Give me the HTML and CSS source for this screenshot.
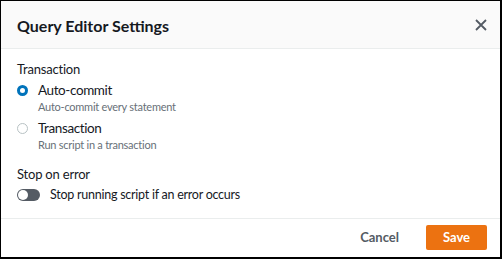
FILE: index.html
```html
<!DOCTYPE html>
<html>
<head>
<meta charset="utf-8">
<link rel="stylesheet" href="styles.css">
</head>
<body>
<div class="modal">
  <div class="header">
    <div class="title">Query Editor Settings</div>
    <svg class="close" width="12" height="12" viewBox="0 0 12 12"><path d="M1 1L11 11M11 1L1 11" stroke="#545b64" stroke-width="1.8" fill="none"/></svg>
  </div>
  <div class="body">
    <div class="group">
      <div class="label">Transaction</div>
      <div class="radio-row">
        <span class="radio checked"></span>
        <div class="radio-text">
          <div class="opt">Auto-commit</div>
          <div class="desc">Auto-commit every statement</div>
        </div>
      </div>
      <div class="radio-row">
        <span class="radio"></span>
        <div class="radio-text">
          <div class="opt">Transaction</div>
          <div class="desc">Run script in a transaction</div>
        </div>
      </div>
    </div>
    <div class="group">
      <div class="label">Stop on error</div>
      <div class="toggle-row">
        <span class="toggle"><span class="knob"></span></span>
        <span class="toggle-text">Stop running script if an error occurs</span>
      </div>
    </div>
  </div>
  <div class="footer">
    <button class="cancel">Cancel</button>
    <button class="save">Save</button>
  </div>
</div>
</body>
</html>
```
FILE: styles.css
```css
* { box-sizing: border-box; }
html, body { margin: 0; padding: 0; }
body {
  width: 502px;
  height: 259px;
  background: #000;
  font-family: Lato, "Open Sans", "Liberation Sans", Arial, sans-serif;
  color: #16191f;
  overflow: hidden;
}
.modal {
  margin: 1px 2px 2px 1px;
  width: 499px;
  height: 256px;
  background: #fff;
  display: flex;
  flex-direction: column;
}
.header {
  height: 48px;
  background: #fafafa;
  border-bottom: 1px solid #eaeded;
  display: flex;
  align-items: center;
  justify-content: space-between;
  padding: 0 13px 0 16px;
}
.title {
  font-weight: 700;
  font-size: 16px;
  margin-top: 1px;
}
.close { display: block; }
.body {
  flex: 1;
  padding: 12px 16px 0 16px;
  display: flex;
  flex-direction: column;
  gap: 9px;
}
.label {
  font-size: 13px;
  line-height: 16px;
  margin-bottom: 4px;
  letter-spacing: -0.2px;
}
.radio-row {
  display: flex;
  align-items: flex-start;
  gap: 10px;
  margin-bottom: 5px;
}
.radio {
  width: 11px;
  height: 11px;
  border-radius: 50%;
  border: 1px solid #b8c2c4;
  margin-top: 4px;
  flex: none;
}
.radio.checked {
  border: 3.5px solid #0073bb;
}
.opt {
  font-size: 13.5px;
  line-height: 18px;
  letter-spacing: -0.4px;
}
.desc {
  font-size: 11px;
  line-height: 15px;
  color: #687078;
  letter-spacing: -0.25px;
}
.toggle-row {
  display: flex;
  align-items: center;
  gap: 10px;
}
.toggle {
  width: 23px;
  height: 12px;
  border-radius: 6px;
  background: #545b64;
  position: relative;
  flex: none;
}
.knob {
  position: absolute;
  left: 1px;
  top: 1px;
  width: 10px;
  height: 10px;
  border-radius: 50%;
  background: #fff;
}
.toggle-text { font-size: 12.5px; line-height: 18px; letter-spacing: -0.25px; }
.footer {
  height: 39px;
  border-top: 1px solid #eaeded;
  display: flex;
  align-items: center;
  justify-content: flex-end;
  padding: 0 13px 2px 0;
  gap: 27px;
}
button {
  font-family: inherit;
  font-weight: 700;
  font-size: 13px;
  border: none;
  cursor: pointer;
}
.cancel {
  background: none;
  color: #545b64;
  padding: 0;
}
.save {
  background: #ec7211;
  color: #fff;
  width: 61px;
  height: 25px;
  border-radius: 2px;
}
```
